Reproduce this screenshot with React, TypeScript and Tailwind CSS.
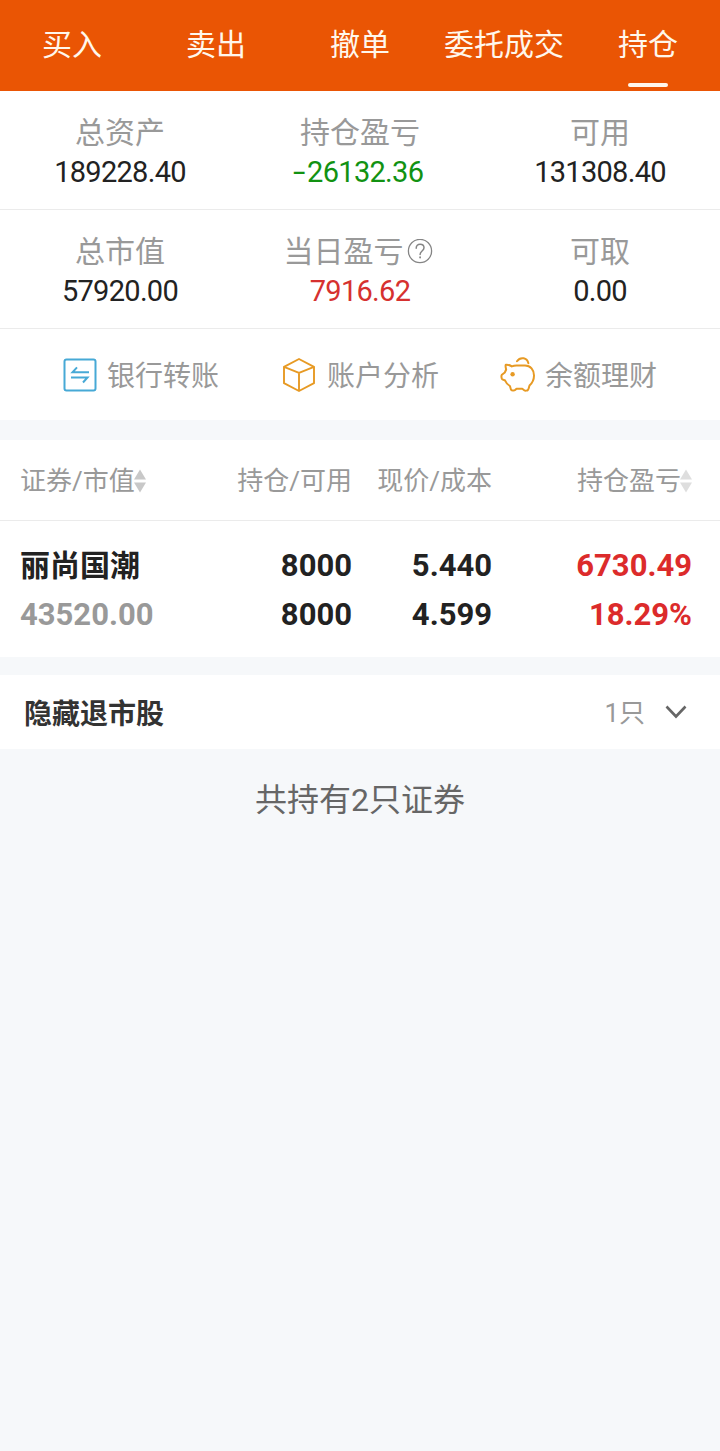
import React from 'react';

interface StatItem {
    label: string;
    value: string;
    color?: string;
    help?: boolean;
}

interface Holding {
    name: string;
    marketValue: string;
    amount: string;
    available: string;
    price: string;
    cost: string;
    profit: string;
    profitRate: string;
}

const TABS = ['买入', '卖出', '撤单', '委托成交', '持仓'];
const ACTIVE_TAB = '持仓';

const STATS: StatItem[][] = [
    [
        { label: '总资产', value: '189228.40' },
        { label: '持仓盈亏', value: '-26132.36', color: 'text-[#129212] tracking-[-0.15px]' },
        { label: '可用', value: '131308.40' },
    ],
    [
        { label: '总市值', value: '57920.00' },
        { label: '当日盈亏', value: '7916.62', color: 'text-[#d6312f]', help: true },
        { label: '可取', value: '0.00' },
    ],
];

const HOLDINGS: Holding[] = [
    {
        name: '丽尚国潮',
        marketValue: '43520.00',
        amount: '8000',
        available: '8000',
        price: '5.440',
        cost: '4.599',
        profit: '6730.49',
        profitRate: '18.29%',
    },
];

const HelpIcon = () => (
    <svg width="26" height="26" viewBox="0 0 26 26" fill="none" stroke="#858585" strokeWidth="1.3" strokeLinecap="round">
        <circle cx="13" cy="12" r="11.6" />
        <path d="M9.2 9.200c0-2.400 1.600-4 3.900-4s3.900 1.500 3.900 3.600c0 3.200-3.900 3.300-3.900 6.600" strokeWidth="1.5" />
        <path d="M13.1 18.2v.4" strokeWidth="1.8" />
    </svg>
);

const TransferIcon = () => (
    <svg width="34" height="34" viewBox="0 0 34 34" fill="none" stroke="#47a9d6" strokeWidth="2">
        <rect x="1.5" y="1.5" width="31" height="31" rx="2" />
        <path d="M26 14.300H9.500l4.500-5M8 19.500h16.500l-4.500 5" />
    </svg>
);

const BoxIcon = () => (
    <svg width="34" height="36" viewBox="0 0 34 36" fill="none" stroke="#e79a24" strokeWidth="1.9" strokeLinejoin="round">
        <path d="M17 2l15 7.8v16.4L17 34 2 26.200V9.800z" />
        <path d="M2 9.800l15 6 15-6M17 15.800V34" />
    </svg>
);

const PiggyIcon = () => (
    <svg width="36" height="36" viewBox="0 0 36 36" fill="none" stroke="#e79a24" strokeWidth="2" strokeLinecap="round" strokeLinejoin="round">
        <path d="M17 4.200c1.500-2.200 4-3.400 6.700-2.900 2.400.5 4 2.300 4.700 4.900" />
        <path d="M16.500 8.500h8.500c5.500 0 9 4.300 9 10 0 4.300-1.700 7.500-4.500 10.100-.6 1.300-.5 3-1.600 4.400-.6.7-2.800.9-3.700.2l-1.900-1.400h-5.800l-1.400 1.300c-.9.8-3.300.6-3.900-.2-.8-1-.6-2.600-1.300-3.900C7.600 27.600 6 26 5.100 23.500l-2.700-1.200c-1-.5-1.300-3.800-.5-4.600l2.900-2.200c.5-1.200.8-2 1.400-2.900-.3-1.600-1.100-3.500-.4-4.800 2.300-.2 4.300.5 6 1.600 1.400-.6 3-.9 4.700-.9z" />
        <circle cx="12.600" cy="17.300" r="2.200" fill="#e79a24" stroke="none" />
    </svg>
);

const SortIcon = ({ color }: { color: string }) => (
    <svg className="-ml-px" width="12" height="24" viewBox="0 0 12 24" fill={color}>
        <path d="M6 0.500l6 10H0z" />
        <path d="M6 23.500l6-10H0z" />
    </svg>
);

// the minus sign is drawn wider than the digits' own hyphen
const StatValue = ({ value }: { value: string }) =>
    value.startsWith('-') ? (
        <>
            <span className="mr-[3px] inline-block origin-right scale-x-[1.55]">-</span>
            <span className="tracking-[-0.7px]">{value.slice(1)}</span>
        </>
    ) : (
        <>{value}</>
    );

const ACTIONS = [
    { label: '银行转账', icon: <TransferIcon />, layout: 'pl-[63px] gap-[10px]' },
    { label: '账户分析', icon: <BoxIcon />, layout: 'pl-[42px] gap-[11px]' },
    { label: '余额理财', icon: <PiggyIcon />, layout: 'pl-[20px] gap-[9px]' },
];

const App = () => {
    return (
        <div className="min-h-[1451px] w-[720px] bg-[#f6f8fa] font-[Roboto,'Noto_Sans_CJK_SC',sans-serif] text-[#222]">
            {/* Tabs */}
            <nav className="grid h-[91px] grid-cols-5 bg-[#ea5504] text-[30px] text-[#fff7ec]">
                {TABS.map(tab => (
                    <div key={tab} className="flex flex-col items-center justify-between pt-[15px] pb-[4px] leading-[60px] whitespace-nowrap">
                        {tab}
                        {tab === ACTIVE_TAB && <span className="h-1 w-10 rounded-full bg-[#fff7ec]" />}
                    </div>
                ))}
            </nav>

            {/* Account overview */}
            <section className="bg-white">
                {STATS.map((row, i) => (
                    <div key={i} className="grid h-[119px] grid-cols-3 border-b border-[#ebebeb]">
                        {row.map(item => (
                            <div key={item.label} className="flex flex-col items-center pt-[22px]">
                                <div className="flex h-[39px] items-center gap-[3px] text-[30px] leading-[39px] text-[#999]">
                                    {item.label}
                                    {item.help && <span className="mr-1"><HelpIcon /></span>}
                                </div>
                                <div className={`text-[29px] leading-[41px] ${item.color ?? ''}`}>
                                    <span className="tracking-[-0.7px]"><StatValue value={item.value} /></span>
                                </div>
                            </div>
                        ))}
                    </div>
                ))}
                <div className="grid h-[91px] grid-cols-3 text-[28px] text-[#999]">
                    {ACTIONS.map(action => (
                        <div key={action.label} className={`flex items-center whitespace-nowrap ${action.layout}`}>
                            {action.icon}
                            <span className="pt-1">{action.label}</span>
                        </div>
                    ))}
                </div>
            </section>

            {/* Holdings */}
            <section className="mt-5 bg-white">
                <div className="grid h-[81px] grid-cols-[192px_140px_140px_200px] items-center border-b border-[#ebebeb] pt-0.5 pl-5 text-[26px] text-[#999]">
                    <div className="flex items-center">
                        证券/市值
                        <SortIcon color="#c8c8c8" />
                    </div>
                    <div className="text-right">持仓/可用</div>
                    <div className="text-right">现价/成本</div>
                    <div className="flex items-center justify-end">
                        持仓盈亏
                        <SortIcon color="#dedede" />
                    </div>
                </div>
                {HOLDINGS.map(h => (
                    <div key={h.name} className="grid h-[136px] grid-cols-[192px_140px_140px_200px] content-center pt-0.5 pl-5 text-right text-[31px] leading-[49px] font-bold">
                        <div className="text-left text-[30px]">{h.name}</div>
                        <div>{h.amount}</div>
                        <div>{h.price}</div>
                        <div className="text-[#dc2b2b]">{h.profit}</div>
                        <div className="text-left text-[#999]">{h.marketValue}</div>
                        <div>{h.available}</div>
                        <div>{h.cost}</div>
                        <div className="text-[#dc2b2b]">{h.profitRate}</div>
                    </div>
                ))}
            </section>

            {/* Delisted stocks */}
            <section className="mt-[18px] flex h-[74px] items-center bg-white pr-[33px] pl-6">
                <span className="pt-[5px] text-[28px] font-bold text-[#333]">隐藏退市股</span>
                <span className="ml-auto pt-0.5 text-[26px] text-[#999]">1只</span>
                <svg className="ml-5" width="22" height="14" viewBox="0 0 22 14" fill="none" stroke="#666" strokeWidth="2.600">
                    <path d="M1.500 1.500L11 11.500l9.500-10" />
                </svg>
            </section>

            <p className="pt-[27px] text-center text-[32px] leading-[48px] text-[#666]">共持有2只证券</p>
        </div>
    );
};

export default App;
